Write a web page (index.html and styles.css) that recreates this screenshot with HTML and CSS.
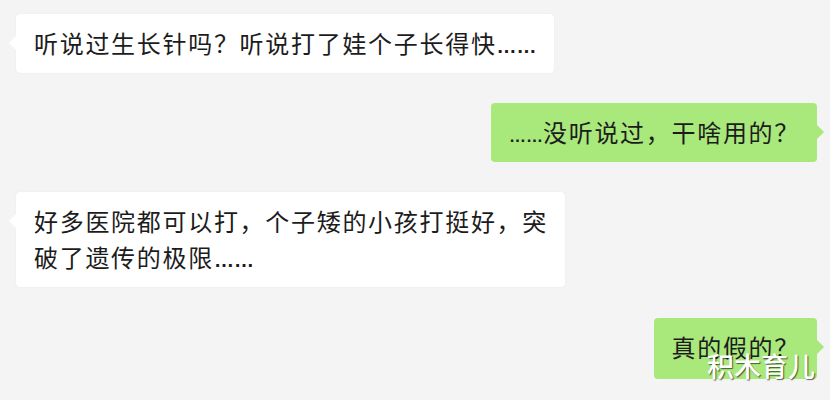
FILE: index.html
```html
<!DOCTYPE html>
<html lang="zh-CN">
<head>
  <meta charset="UTF-8">
  <meta name="viewport" content="width=device-width, initial-scale=1.0">
  <title>聊天记录</title>
  <link rel="stylesheet" href="styles.css">
</head>
<body>
  <div class="chat">
    <div class="msg msg-left">听说过生长针吗？听说打了娃个子长得快<span class="dots">……</span></div>
    <div class="msg msg-right"><span class="dots dots-small">……</span>没听说过，干啥用的？</div>
    <div class="msg msg-left msg-wide">好多医院都可以打，个子矮的小孩打挺好，突破了遗传的极限<span class="dots">……</span></div>
    <div class="msg msg-right">真的假的？</div>
  </div>
  <div class="watermark">积木育儿</div>
</body>
</html>
```

FILE: styles.css
```css
body {
  margin: 0;
  width: 830px;
  height: 400px;
  overflow: hidden;
  background: #f4f4f4;
  font-family: "Noto Sans CJK SC", "Noto Sans", sans-serif;
  color: #1c1c1c;
  position: relative;
}
.chat {
  display: flex;
  flex-direction: column;
  gap: 30px;
  padding: 14px 13px 0 16px;
}
.msg {
  position: relative;
  box-sizing: border-box;
  padding: 11px 17px 12px 18px;
  font-size: 24px;
  line-height: 36px;
  letter-spacing: 1.7px;
  border-radius: 4px;
}
.msg::before {
  content: "";
  position: absolute;
  top: 24px;
  width: 10px;
  height: 10px;
  transform: rotate(45deg);
}
.msg-left {
  align-self: flex-start;
  background: #fff;
  box-shadow: 0 0 1px rgba(0, 0, 0, 0.12);
}
.msg-left::before {
  left: -5px;
  background: #fff;
}
.msg-right {
  align-self: flex-end;
  background: #a9e87b;
}
.msg-right:last-child {
  margin-top: 1px;
  padding-bottom: 14px;
}
.msg-right::before {
  right: -5px;
  background: #a9e87b;
}
.msg-wide {
  max-width: 549px;
}
.dots {
  font-family: "Liberation Sans", sans-serif;
  font-size: 20px;
  line-height: 0;
  letter-spacing: 0;
  font-weight: bold;
}
.dots-small {
  font-size: 17px;
}
.watermark {
  position: absolute;
  right: 15px;
  bottom: 19px;
  font-size: 27px;
  line-height: 30px;
  font-weight: 500;
  color: #fff;
  text-shadow: 1px 1px 1px rgba(0, 0, 0, 0.6);
}
```
